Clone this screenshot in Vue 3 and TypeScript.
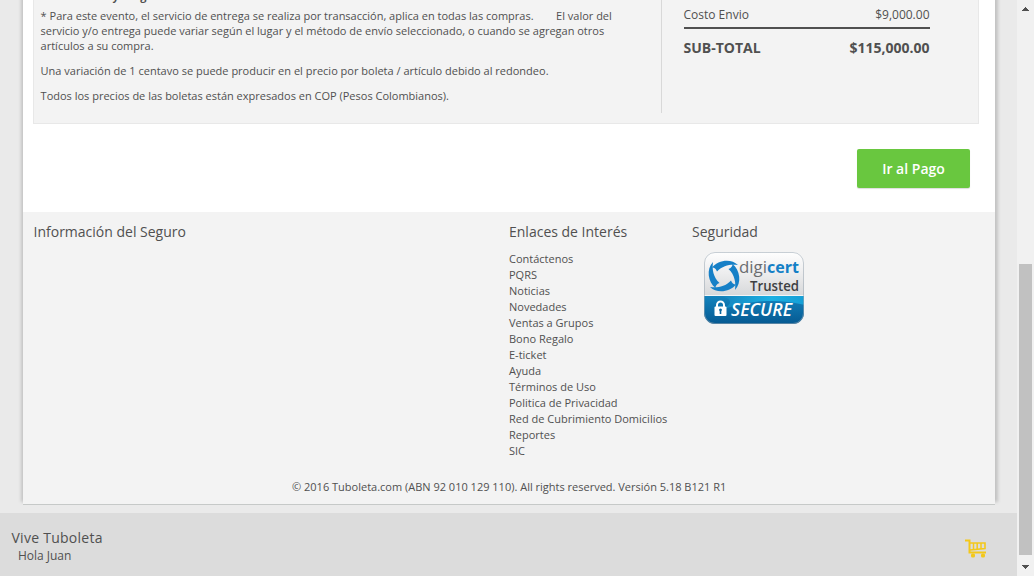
<script setup lang="ts">
const links: string[] = [
  'Contáctenos', 'PQRS', 'Noticias', 'Novedades', 'Ventas a Grupos', 'Bono Regalo', 'E-ticket',
  'Ayuda', 'Términos de Uso', 'Politica de Privacidad', 'Red de Cubrimiento Domicilios', 'Reportes', 'SIC',
]
const blades: number[] = [0, 90, 180, 270]
</script>

<template>
  <div class="window">
    <div class="viewport">
      <div class="backdrop">
        <main class="page">
          <section class="content">
            <div class="summary">
              <div class="notes">
                <h4>Costos Envio y Cargos</h4>
                <p>
                  <span>* Para este evento, el servicio de entrega se realiza por transacción, aplica en todas las compras.</span><span class="aside">El valor del</span><br>
                  <span>servicio y/o entrega puede variar según el lugar y el método de envío seleccionado, o cuando se agregan otros</span><br>
                  <span>artículos a su compra.</span>
                </p>
                <p>Una variación de 1 centavo se puede producir en el precio por boleta / artículo debido al redondeo.</p>
                <p>Todos los precios de las boletas están expresados en COP (Pesos Colombianos).</p>
              </div>
              <div class="totals">
                <div class="cost"><span>Costo Envio</span><span>$9,000.00</span></div>
                <div class="subtotal"><span>SUB-TOTAL</span><span>$115,000.00</span></div>
              </div>
            </div>
            <button class="pay">Ir al Pago</button>
          </section>
          <footer class="footer">
            <div class="columns">
              <div class="insurance"><h3>Información del Seguro</h3></div>
              <div class="interest">
                <h3>Enlaces de Interés</h3>
                <ul><li v-for="link in links" :key="link">{{ link }}</li></ul>
              </div>
              <div class="security">
                <h3>Seguridad</h3>
                <svg class="seal" width="102" height="74" viewBox="0 0 102 74">
                  <defs>
                    <linearGradient id="silver" x1="0" y1="0" x2="0" y2="1">
                      <stop offset="0" stop-color="#fff" /><stop offset=".3" stop-color="#ededee" /><stop offset=".62" stop-color="#d5d7d9" />
                    </linearGradient>
                    <linearGradient id="blue" x1="0" y1="0" x2="0" y2="1">
                      <stop offset="0" stop-color="#1483bd" /><stop offset="1" stop-color="#055890" />
                    </linearGradient>
                    <linearGradient id="glow" x1="0" y1="0" x2="1" y2="0">
                      <stop offset="0" stop-color="#1584bd" /><stop offset=".6" stop-color="#1bb0e3" /><stop offset="1" stop-color="#159ed5" />
                    </linearGradient>
                    <clipPath id="shape"><rect x="1" y="1" width="100" height="72" rx="11" /></clipPath>
                  </defs>
                  <g clip-path="url(#shape)">
                    <rect width="102" height="74" fill="url(#silver)" />
                    <rect y="45" width="102" height="29" fill="url(#blue)" />
                    <path d="M18 45H102V54C78 48 48 48 18 59C30 53 30 48 18 45Z" fill="url(#glow)" />
                    <rect y="44" width="102" height="1" fill="#f4f5f6" />
                  </g>
                  <rect x="1.5" y="1.5" width="99" height="71" rx="10.5" fill="none" stroke="#9ba8b2" stroke-opacity=".55" />
                  <g transform="translate(21 25)" fill="#1680c7">
                    <path v-for="angle in blades" :key="angle" :transform="`rotate(${angle})`" d="M-12 -8.5C-6 -16 7 -18 14 -11C7 -12 -1 -11 -7 -4.5C-8 -7 -9.5 -8.5 -12 -8.5Z" />
                  </g>
                  <text x="36" y="22" font-size="16" fill="#6b6d70" textLength="28" lengthAdjust="spacingAndGlyphs">digi</text>
                  <text x="64" y="22" font-size="16" font-weight="700" fill="#1480c6" textLength="32" lengthAdjust="spacingAndGlyphs">cert</text>
                  <text x="47" y="39.5" font-size="13.5" font-weight="600" fill="#3d3f42" textLength="49" lengthAdjust="spacingAndGlyphs">Trusted</text>
                  <path d="M14 56V54a3.5 3.5 0 0 1 7 0V56" fill="none" stroke="#fff" stroke-width="2" />
                  <rect x="11.5" y="55.5" width="12" height="9.5" rx="1" fill="#fff" />
                  <path d="M16 59a1.5 1.5 0 0 1 3 0l-.7 1.2V63h-1.6v-2.8Z" fill="#0b679f" />
                  <text x="28" y="64.5" font-size="17.5" font-weight="600" font-style="italic" fill="#fff" textLength="61" lengthAdjust="spacingAndGlyphs">SECURE</text>
                </svg>
              </div>
            </div>
            <p class="copyright">© 2016 Tuboleta.com (ABN 92 010 129 110). All rights reserved. Versión 5.18 B121 R1</p>
          </footer>
        </main>
      </div>
      <div class="account">
        <div><div class="brand">Vive Tuboleta</div><div class="hello">Hola Juan</div></div>
        <svg class="cart" width="22" height="20" viewBox="0 0 22 20">
          <g fill="none" stroke="#f3c81b" stroke-width="2">
            <path d="M0 1.5H4.5V13.5H21" /><path d="M4 4H20V9.5L5 11" stroke-width="1.6" />
            <path d="M8.5 4V10.5M12.2 4V10.5M16 4V10" stroke-width="1.5" />
          </g>
          <rect x="6" y="14.5" width="4" height="4" rx="1.5" fill="#f3c81b" /><rect x="16" y="14.5" width="4" height="4" rx="1.5" fill="#f3c81b" />
        </svg>
      </div>
    </div>
    <div class="scrollbar">
      <svg width="17" height="17" viewBox="0 0 17 17" shape-rendering="crispEdges"><path d="M8 7h1v1h1v1h1v1h1v1H5v-1h1V9h1V8h1Z" fill="#505050" /></svg>
      <div class="track"><div class="thumb"></div></div>
      <svg width="17" height="17" viewBox="0 0 17 17" shape-rendering="crispEdges"><path d="M5 6h7v1h-1v1h-1v1H9v1H8V9H7V8H6V7H5Z" fill="#505050" /></svg>
    </div>
  </div>
</template>

<style>
body { overflow: hidden; }
</style>
<style scoped>
.window { display: flex; width: 1034px; height: 576px; overflow: hidden; font-family: "Open Sans", sans-serif; color: #505050; background: #eaeaea; }
.window * { box-sizing: border-box; }
.viewport { width: 1017px; display: flex; flex-direction: column; }
.backdrop { height: 513px; padding-left: 23px; background: #eaeaea; overflow: hidden; }
.page { width: 972px; height: 505px; background: #fff; box-shadow: 3px -3px 3px #c4c4c4, -2px -3px 3px #c4c4c4; border-bottom: 1px solid #c6c9c8; }
.content { height: 212px; padding: 0 16px 0 10px; display: flex; flex-direction: column; align-items: flex-end; }
.summary { width: 946px; height: 124px; background: #f3f3f3; border: solid #e8e8e8; border-width: 0 1px 1px; display: flex; }
.notes { width: 628px; height: 113px; padding-left: 6.6px; border-right: 1px solid #d8d8d8; font-size: 11px; line-height: 15px; white-space: nowrap; }
h4 { margin: -12px 0 5px; font-size: 11px; line-height: 15px; }
.notes p { margin: 0 0 10px; }
.aside { margin-left: 22.5px; }
.totals { width: 246px; margin-left: 22px; }
.cost, .subtotal { display: flex; justify-content: space-between; }
.cost { height: 29px; padding-top: 6px; font-size: 12px; line-height: 17px; border-bottom: 2px solid #505050; }
.cost span, .subtotal span { margin-left: -0.5px; }
.cost span:last-child, .subtotal span:last-child { margin-right: 0.5px; }
.subtotal { padding-top: 10px; font-size: 14px; font-weight: 700; line-height: 18px; }
.pay { width: 113px; height: 39px; margin: 25px 9px 0 0; padding: 0; border: 0; border-radius: 2px; background: #69c73f; color: #fff; font: 600 14px/39px "Open Sans", sans-serif; box-shadow: 0 1px 1px #ddd; }
.footer { height: 292px; padding: 11px 0 0 10.5px; background: #f3f3f3; }
.columns { display: flex; height: 256px; }
.insurance { width: 475.5px; }
.interest { width: 183px; white-space: nowrap; }
h3 { margin: 0; font-size: 14px; font-weight: 400; line-height: 18px; }
ul { margin: 10px 0 0; padding: 0; list-style: none; font-size: 11px; line-height: 16px; }
.seal { display: block; margin: 10px 0 0 11px; }
.seal text { font-family: "Open Sans", sans-serif; }
.copyright { margin: 0 0 0 258.5px; font-size: 11px; line-height: 16px; white-space: nowrap; }
.account { flex: 1; display: flex; justify-content: space-between; background: #dcdcdc; padding: 15px 30px 0 11.5px; }
.brand { font-size: 14px; font-weight: 500; letter-spacing: 0.26px; line-height: 20px; }
.hello { margin-left: 6.4px; font-size: 12px; line-height: 16px; }
.cart { margin-top: 11px; }
.scrollbar { width: 17px; background: #f1f1f1; display: flex; flex-direction: column; }
.scrollbar svg { display: block; }
.track { height: 542px; padding: 247px 2px 0; }
.thumb { height: 291px; background: #c1c1c1; }
</style>
